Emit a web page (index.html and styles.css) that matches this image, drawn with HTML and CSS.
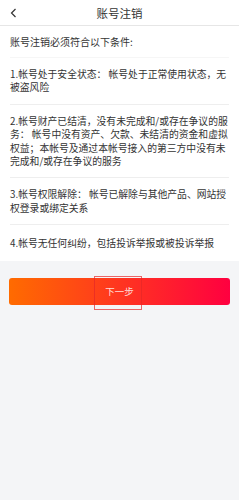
FILE: index.html
```html
<!DOCTYPE html>
<html lang="zh-CN">
<head>
  <meta charset="UTF-8">
  <title>账号注销</title>
  <link rel="stylesheet" href="styles.css">
</head>
<body>

<div class="header">
  <span class="back">
    <svg width="7" height="10" viewBox="0 0 7 10"><polyline points="5.5,1 1.5,5 5.5,9" fill="none" stroke="#333" stroke-width="1.2"/></svg>
  </span>
  <h1>账号注销</h1>
</div>

<div class="card">
  <div class="intro">账号注销必须符合以下条件:</div>
  <div class="rule">1.帐号处于安全状态： 帐号处于正常使用状态，无被盗风险</div>
  <div class="rule">2.帐号财产已结清，没有未完成和/或存在争议的服务： 帐号中没有资产、欠款、未结清的资金和虚拟权益；本帐号及通过本帐号接入的第三方中没有未完成和/或存在争议的服务</div>
  <div class="rule">3.帐号权限解除： 帐号已解除与其他产品、网站授权登录或绑定关系</div>
  <div class="rule last">4.帐号无任何纠纷，包括投诉举报或被投诉举报</div>
</div>

<div class="actions">
  <button class="next">下一步</button>
  <span class="mark"></span>
</div>

</body>
</html>
```

FILE: styles.css
```css
body {
  margin: 0;
  background-color: #f4f5f7;
  font-family: "Noto Sans CJK SC", sans-serif;
  color: #333;
}
.header {
  position: relative;
  height: 25px;
  background-color: #fff;
  border-bottom: 1px solid #e6e6e6;
  display: flex;
  align-items: center;
  justify-content: center;
}
.header h1 {
  margin: 0;
  font-size: 11.5px;
  font-weight: normal;
  color: #333;
}
.back {
  position: absolute;
  left: 10px;
  top: 8px;
  line-height: 0;
}
.card {
  background-color: #fff;
  padding: 0 10px;
}
.intro {
  height: 31px;
  line-height: 31px;
  font-size: 10px;
  border-bottom: 1px solid #f6f6f6;
}
.rule {
  font-size: 9.8px;
  line-height: 13.4px;
  padding: 10px 0 9px;
  border-bottom: 1px solid #eeeeee;
}
.rule.last {
  border-bottom: none;
  padding: 12px 0 10px;
}
.actions {
  position: relative;
  padding: 17px 9px;
}
.next {
  display: block;
  width: 100%;
  height: 27px;
  border: none;
  border-radius: 3px;
  background: linear-gradient(to right, #ff6b00, #ff0040);
  color: rgba(255, 255, 255, 0.85);
  font-family: "Noto Sans CJK SC", sans-serif;
  font-size: 9.5px;
}
.mark {
  position: absolute;
  left: 94px;
  top: 15px;
  width: 46px;
  height: 32px;
  border: 1px solid rgba(230, 40, 40, 0.7);
}
```
